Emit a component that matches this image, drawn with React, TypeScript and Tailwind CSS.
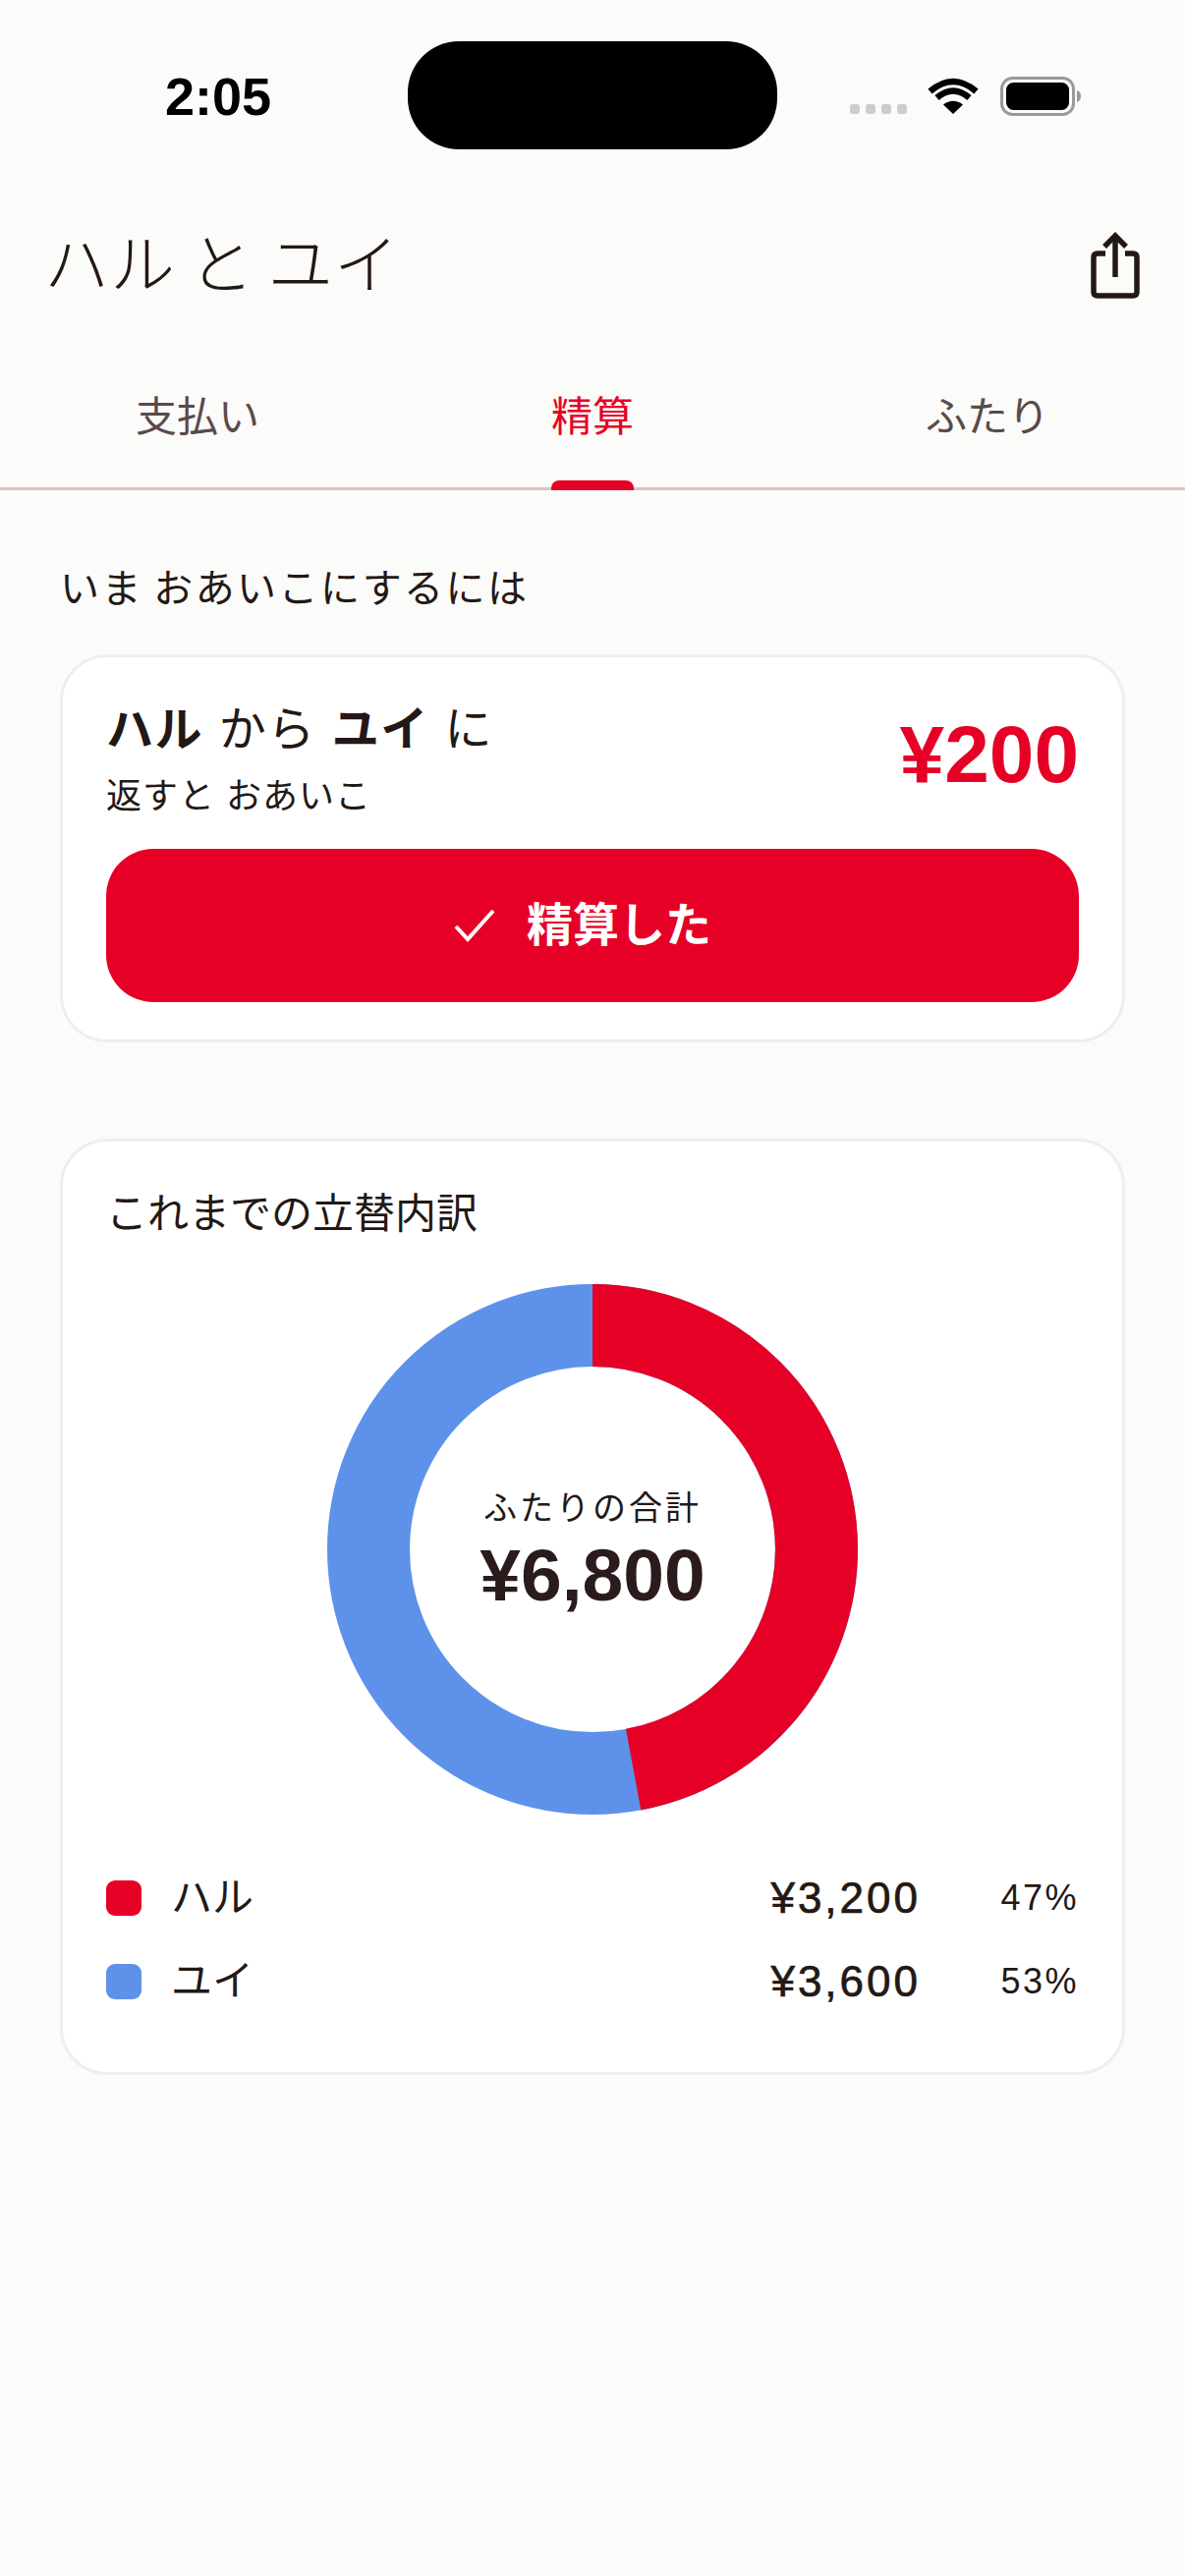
const F = { fontFamily: '"Liberation Sans","Noto Sans CJK JP",sans-serif' };

function Wifi() {
  return (
    <svg width="52" height="38" viewBox="0 0 52 38" fill="none">
      <path d="M26 38 L16 28.5 Q26 21 36 28.5 Z" fill="#000" />
      <path d="M9.5 21.5 Q26 7.5 42.5 21.5" stroke="#000" strokeWidth="6.5" />
      <path d="M2.5 13 Q26 -7 49.5 13" stroke="#000" strokeWidth="6.5" transform="translate(0 2)" />
    </svg>
  );
}

function Battery() {
  return (
    <svg width="82" height="40" viewBox="0 0 82 40" fill="none">
      <rect x="1.5" y="1.5" width="73" height="37" rx="11" stroke="#999" strokeWidth="3" />
      <rect x="6" y="6" width="64" height="28" rx="7.5" fill="#000" />
      <path d="M78 14 C81 15 82 17 82 20 C82 23 81 25 78 26 Z" fill="#999" />
    </svg>
  );
}

function Share() {
  return (
    <svg width="50" height="68" viewBox="0 0 50 68" fill="none" stroke="#231815" strokeWidth="5.5">
      <path d="M15 22 H7 Q3 22 3 26 V61 Q3 65 7 65 H43 Q47 65 47 61 V26 Q47 22 43 22 H35" />
      <path d="M25 46 V5" />
      <path d="M14 15 L25 4 L36 15" />
    </svg>
  );
}

function Donut() {
  const r = 228;
  const c = 2 * Math.PI * r;
  return (
    <svg width="540" height="540" viewBox="0 0 540 540" className="block">
      <circle cx="270" cy="270" r={r} fill="none" stroke="#5e92ea" strokeWidth="84" />
      <circle
        cx="270"
        cy="270"
        r={r}
        fill="none"
        stroke="#e60026"
        strokeWidth="84"
        strokeDasharray={`${(c * 3200) / 6800} ${c}`}
        transform="rotate(-90 270 270)"
      />
    </svg>
  );
}

function LegendRow({ color, name, amount, pct }: { color: string; name: string; amount: string; pct: string }) {
  return (
    <div className="flex items-center h-[50px]">
      <div className="w-[36px] h-[36px] rounded-[9px]" style={{ background: color }} />
      <div className="ml-[30px] text-[42px] leading-[50px] text-[#231815]">{name}</div>
      <div className="ml-auto text-[44px] leading-[50px] tracking-[3px] [-webkit-text-stroke:0.7px_#231815] text-[#231815]">{amount}</div>
      <div className="w-[161px] text-right text-[36px] leading-[50px] tracking-[2.5px] text-[#231815]">{pct}</div>
    </div>
  );
}

export default function App() {
  return (
    <div style={F} className="w-[1206px] h-[2622px] bg-[#fbfbf9] text-[#231815] overflow-hidden">
      <div className="relative h-[190px]">
        <div className="absolute left-[415px] top-[42px] w-[376px] h-[110px] rounded-[52px] bg-black" />
        <div className="absolute left-[168px] top-[66px] text-[54px] leading-[64px] font-bold text-black">2:05</div>
        <div className="absolute left-[865px] top-[106px] flex gap-[6px]">
          <div className="w-[10px] h-[10px] rounded-[3px] bg-[#cccccc]" />
          <div className="w-[10px] h-[10px] rounded-[3px] bg-[#cccccc]" />
          <div className="w-[10px] h-[10px] rounded-[3px] bg-[#cccccc]" />
          <div className="w-[10px] h-[10px] rounded-[3px] bg-[#cccccc]" />
        </div>
        <div className="absolute left-[944px] top-[78px]"><Wifi /></div>
        <div className="absolute left-[1018px] top-[78px]"><Battery /></div>
      </div>

      <div className="flex items-center justify-between pl-[45px] pr-[46px] pt-[6px] h-[153px]">
        <div className="text-[66px] leading-[80px] font-light tracking-[1px] [word-spacing:-6px] whitespace-pre">ハル と ユイ</div>
        <Share />
      </div>

      <div className="flex h-[156px] border-b-[3px] border-[#d8c4c4]">
        <div className="flex-1 flex justify-center pt-[56px] text-[42px] leading-[52px] text-[#5a4a4a]">支払い</div>
        <div className="relative flex-1 flex justify-center pt-[56px] text-[42px] leading-[52px] text-[#e60026]">
          精算
          <div className="absolute left-[159px] bottom-[-3px] w-[84px] h-[10px] rounded-t-[8px] bg-[#e60026]" />
        </div>
        <div className="flex-1 flex justify-center pt-[56px] text-[42px] leading-[52px] text-[#5a4a4a]">ふたり</div>
      </div>

      <div className="px-[61px]">
        <div className="mt-[75px] text-[40px] leading-[50px] tracking-[2.4px] [word-spacing:-3px] whitespace-pre">いま おあいこにするには</div>

        <div className="mt-[42px] h-[395px] rounded-[48px] border-[3px] border-[#eeeeee] bg-white px-[44px] pt-[41px]">
          <div className="flex justify-between items-start h-[154px]">
            <div>
              <div className="text-[48px] leading-[66px] tracking-[1.5px] [word-spacing:1px] whitespace-pre">
                <span className="font-bold">ハル</span> から <span className="font-bold">ユイ</span> に
              </div>
              <div className="mt-[11px] text-[36px] leading-[48px] tracking-[1px] whitespace-pre">返すと おあいこ</div>
            </div>
            <div className="mt-[13px] text-[82px] leading-[90px] font-bold text-[#e60026]">¥200</div>
          </div>
          <div className="h-[156px] pr-[20px] rounded-[48px] bg-[#e60026] flex items-center justify-center gap-[32px] text-white">
            <svg width="42" height="34" viewBox="0 0 42 34" fill="none" stroke="#fff" strokeWidth="4">
              <path d="M2 18 L14 31 L40 2" />
            </svg>
            <div className="text-[47px] leading-[60px] font-bold">精算した</div>
          </div>
        </div>

        <div className="mt-[98px] h-[953px] rounded-[48px] border-[3px] border-[#eeeeee] bg-white px-[44px] pt-[44px]">
          <div className="text-[42px] leading-[60px]">これまでの立替内訳</div>
          <div className="relative mt-[41px] flex justify-center">
            <Donut />
            <div className="absolute inset-0 flex flex-col items-center justify-center pt-[13px]">
              <div className="text-[34px] leading-[46px] tracking-[3px] mt-[-10px]">ふたりの合計</div>
              <div className="text-[75px] leading-[84px] font-bold text-[#2a1c1c] mt-[3px]">¥6,800</div>
            </div>
          </div>
          <div className="mt-[60px] flex flex-col gap-[35px]">
            <LegendRow color="#e60026" name="ハル" amount="¥3,200" pct="47%" />
            <LegendRow color="#5e92ea" name="ユイ" amount="¥3,600" pct="53%" />
          </div>
        </div>
      </div>
    </div>
  );
}
